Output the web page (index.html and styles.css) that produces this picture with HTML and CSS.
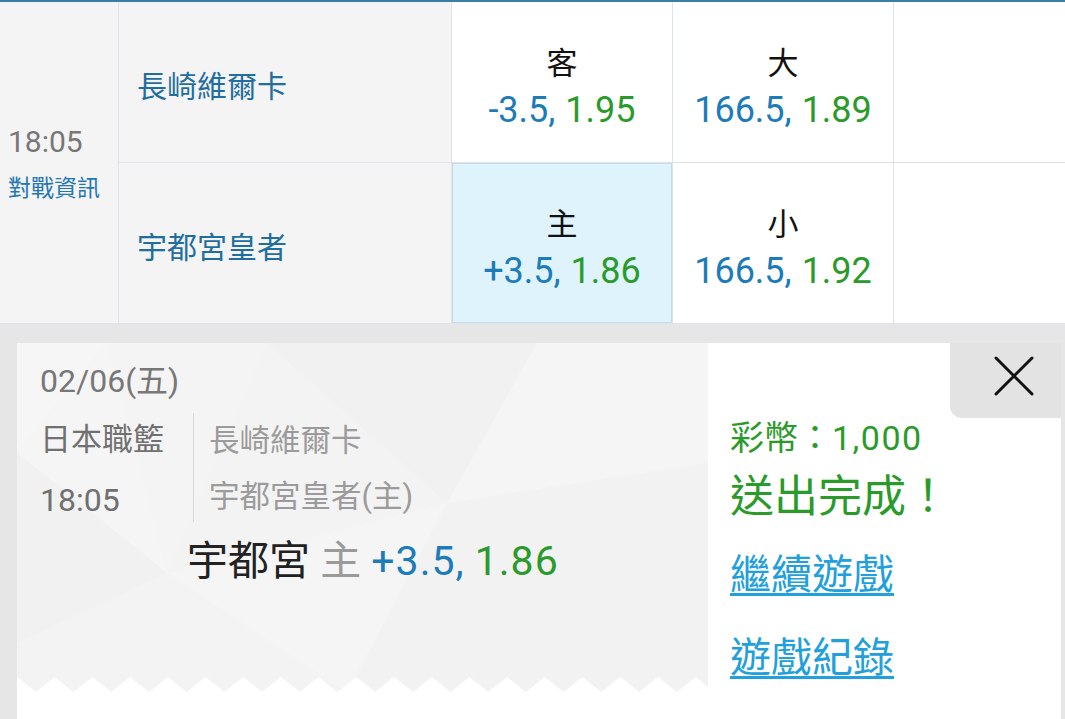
FILE: index.html
```html
<!DOCTYPE html>
<html lang="zh-Hant">
<head>
<meta charset="utf-8">
<title>投注完成</title>
<link rel="stylesheet" href="styles.css">
</head>
<body>
<div class="board">
  <div class="cell time-cell">
    <div class="time">18:05</div>
    <div class="info">對戰資訊</div>
  </div>
  <div class="cell team">長崎維爾卡</div>
  <div class="cell odds">
    <div class="side">客</div>
    <div class="val"><span class="b">-3.5,</span> <span class="g">1.95</span></div>
  </div>
  <div class="cell odds">
    <div class="side">大</div>
    <div class="val"><span class="b">166.5,</span> <span class="g">1.89</span></div>
  </div>
  <div class="cell blank"></div>
  <div class="cell team">宇都宮皇者</div>
  <div class="cell odds selected">
    <div class="side">主</div>
    <div class="val"><span class="b">+3.5,</span> <span class="g">1.86</span></div>
  </div>
  <div class="cell odds">
    <div class="side">小</div>
    <div class="val"><span class="b">166.5,</span> <span class="g">1.92</span></div>
  </div>
  <div class="cell blank"></div>
</div>

<div class="panel">
  <div class="ticket">
    <svg class="facets" width="691" height="350" viewBox="0 0 691 350" aria-hidden="true">
      <rect width="691" height="350" fill="#f3f3f3"/>
      <polygon points="0,0 90,0 0,110" fill="#f6f6f6"/>
      <polygon points="90,0 250,0 150,230" fill="#f4f4f4"/>
      <polygon points="250,0 520,0 430,160" fill="#f1f1f1"/>
      <polygon points="430,160 520,0 691,0 691,120" fill="#f5f5f5"/>
      <polygon points="0,110 150,230 0,300" fill="#f1f1f1"/>
      <polygon points="150,230 430,160 330,350" fill="#f5f5f5"/>
      <polygon points="430,160 691,120 691,350 330,350" fill="#f2f2f2"/>
      <polygon points="0,300 150,230 330,350 0,350" fill="#f3f3f3"/>
      <polygon points="90,0 150,230 0,110" fill="#f5f5f5"/>
    </svg>
    <svg class="zigzag" width="691" height="16" viewBox="0 0 691 16" aria-hidden="true">
      <defs>
        <pattern id="teeth" width="37.7" height="16" patternUnits="userSpaceOnUse">
          <polygon points="0,0 18.85,15 0,15" fill="#fff"/>
          <polygon points="37.7,0 37.7,15 18.85,15" fill="#fff"/>
          <rect x="0" y="15" width="37.7" height="1" fill="#fff"/>
        </pattern>
      </defs>
      <rect width="691" height="16" fill="url(#teeth)"/>
    </svg>
    <div class="ticket-body">
      <div class="date">02/06(五)</div>
      <div class="match">
        <div class="league">
          <div>日本職籃</div>
          <div class="ltime">18:05</div>
        </div>
        <div class="teams">
          <div>長崎維爾卡</div>
          <div>宇都宮皇者(主)</div>
        </div>
      </div>
      <div class="pick"><span class="pteam">宇都宮</span> <span class="pside">主</span> <span class="b">+3.5,</span> <span class="g">1.86</span></div>
    </div>
  </div>
  <div class="result">
    <button class="close" type="button" aria-label="關閉">
      <svg width="40" height="40" viewBox="0 0 40 40" aria-hidden="true">
        <path d="M2 2 L38 38 M38 2 L2 38" stroke="#111" stroke-width="3" stroke-linecap="round" fill="none"/>
      </svg>
    </button>
    <div class="coins">彩幣：<span class="amount">1,000</span></div>
    <div class="done">送出完成！</div>
    <a class="link" href="#">繼續遊戲</a>
    <a class="link second" href="#">遊戲紀錄</a>
  </div>
</div>
</body>
</html>
```

FILE: styles.css
```css
* {
  box-sizing: border-box;
  margin: 0;
  padding: 0;
}

html, body {
  width: 1065px;
  height: 719px;
  overflow: hidden;
}

body {
  background: #e6e6e6;
  font-family: Roboto, "Noto Sans CJK TC", sans-serif;
  color: #222;
}

.b { color: #1c7bb9; }
.g { color: #2a9b2b; }

/* ---------- odds board ---------- */
.board {
  display: grid;
  grid-template-columns: 118px 332px 220px 220px 1fr;
  grid-template-rows: 160px 160px;
  gap: 1px;
  background: #dde3e8;
  border-top: 2px solid #3a7dab;
  border-bottom: 1px solid #dde3e8;
}

.cell {
  background: #fff;
}

.time-cell {
  grid-row: 1 / span 2;
  background: #f4f4f4;
  display: flex;
  flex-direction: column;
  justify-content: center;
  padding: 4px 0 0 8px;
}

.time {
  font-size: 30px;
  line-height: 36px;
  color: #777;
}

.info {
  margin-top: 13px;
  font-size: 23px;
  line-height: 32px;
  color: #2577b3;
}

.team {
  background: #f4f4f4;
  display: flex;
  align-items: center;
  padding: 9px 0 0 18px;
  font-size: 30px;
  line-height: 40px;
  color: #1f6e9f;
}

.odds {
  display: flex;
  flex-direction: column;
  align-items: center;
  justify-content: center;
  padding-top: 15px;
}

.odds .side {
  font-size: 31px;
  line-height: 40px;
  color: #111;
}

.odds .val {
  font-size: 36px;
  line-height: 52px;
  word-spacing: 1px;
}

.odds.selected {
  background: #def3fc;
  box-shadow: inset 0 0 0 1px #c4dcea;
}

/* ---------- confirmation panel ---------- */
.panel {
  display: flex;
  margin: 19px 4px 0 17px;
  height: 376px;
  background: #fff;
}

.ticket {
  position: relative;
  width: 691px;
  height: 350px;
  flex: none;
}

.facets {
  position: absolute;
  left: 0;
  top: 0;
  display: block;
}

.zigzag {
  position: absolute;
  left: 0;
  bottom: 0;
  display: block;
}

.ticket-body {
  position: relative;
  padding: 20px 0 0 23px;
}

.date {
  font-size: 32px;
  line-height: 36px;
  color: #777;
}

.match {
  display: flex;
  margin-top: 11px;
}

.league {
  width: 153px;
  font-size: 31px;
  line-height: 60px;
  color: #707070;
}

.ltime {
  font-size: 32px;
}

.teams {
  margin-top: 3px;
  height: 109px;
  border-left: 1px solid #d9d9d9;
  padding-left: 15px;
  font-size: 30.5px;
  line-height: 56px;
  color: #9b9b9b;
}

.pick {
  margin: 6px 0 0 147px;
  font-size: 41px;
  line-height: 50px;
  white-space: nowrap;
}

.pick .b,
.pick .g {
  letter-spacing: 1px;
}

.pteam { color: #222; }
.pside { color: #9a9a9a; }

.result {
  flex: 1;
  display: flex;
  flex-direction: column;
  align-items: flex-start;
  padding-left: 22px;
}

.close {
  align-self: flex-end;
  width: 111px;
  height: 75px;
  border: none;
  background: #e3e3e3;
  border-bottom-left-radius: 12px;
  display: flex;
  align-items: center;
  justify-content: center;
  padding: 0 0 10px 16px;
  cursor: pointer;
}

.close svg { display: block; }

.coins {
  font-size: 34px;
  line-height: 40px;
  color: #2a9b2b;
}

.amount {
  letter-spacing: 1.5px;
}

.done {
  margin-top: 11px;
  font-size: 44px;
  line-height: 56px;
  color: #2a9b2b;
}

.link {
  margin-top: 22px;
  font-size: 41px;
  line-height: 56px;
  color: #22a0dc;
  text-decoration: underline;
  text-decoration-thickness: 3px;
  text-underline-offset: 4px;
}

.link.second {
  margin-top: 27px;
}
```
